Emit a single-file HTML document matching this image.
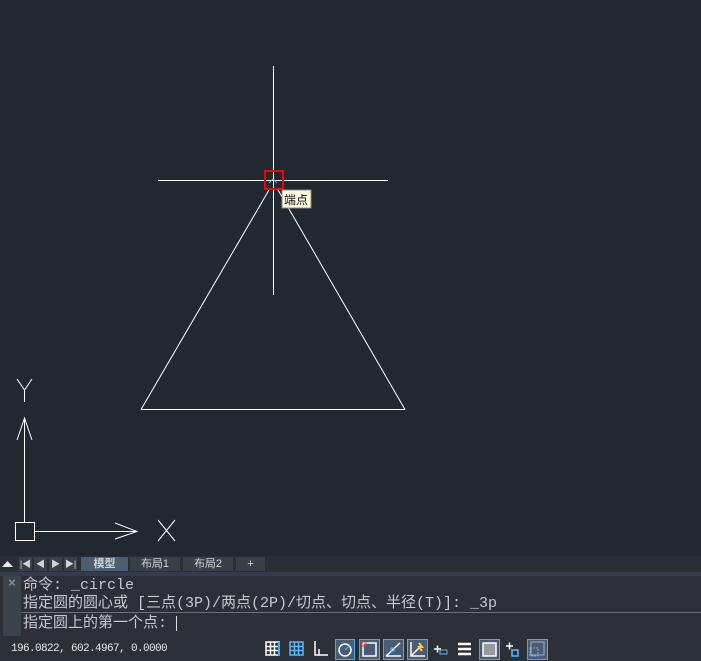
<!DOCTYPE html><html><head><meta charset="utf-8"><style>
*{margin:0;padding:0;box-sizing:border-box}
body{width:701px;height:661px;background:#212830;position:relative;overflow:hidden;font-family:"Liberation Mono","Noto Sans CJK SC",monospace}
.abs{position:absolute}
.tab{position:absolute;top:557px;height:14px;background:#3a3f47;color:#d0d4d8;font-size:11px;line-height:14px;text-align:center;font-family:"Liberation Sans","Noto Sans CJK SC",sans-serif}
.cl{position:absolute;left:23px;font-size:15px;color:#c4c9cf;white-space:nowrap;line-height:18px}
</style></head><body>
<svg class="abs" style="left:0;top:0" width="701" height="556">
<g stroke="#fff" stroke-width="1" fill="none" shape-rendering="crispEdges">
<line x1="273.5" y1="66" x2="273.5" y2="295"/>
<line x1="158" y1="180.5" x2="388" y2="180.5"/>
<line x1="141" y1="409.5" x2="405" y2="409.5"/>
<line x1="24.5" y1="418" x2="24.5" y2="522"/>
<line x1="35" y1="531.5" x2="137" y2="531.5"/>
<rect x="15.5" y="522.5" width="19" height="18"/>
</g>
<g stroke="#fff" stroke-width="1" fill="none">
<line x1="141" y1="409.5" x2="269" y2="190"/>
<line x1="405" y1="409.5" x2="278" y2="190"/>
<polyline points="17,440 24.5,418 32,440"/>
<polyline points="115,523 137,531.5 115,539"/>
<polyline points="17,379 24.5,390 32,379"/><line x1="24.5" y1="390" x2="24.5" y2="402"/>
<line x1="158" y1="520" x2="175" y2="541"/><line x1="175" y1="520" x2="158" y2="541"/>
</g>
<rect x="265" y="171" width="18" height="18" fill="none" stroke="#f00" stroke-width="2"/>
<polyline points="269,183 273,179 277,183" stroke="#6af" fill="none"/>
<rect x="282" y="190" width="29" height="18" fill="#fffbe0" stroke="#888"/>
<text x="284" y="204" font-size="12" fill="#111" font-family="Noto Sans CJK SC,sans-serif">端点</text>
</svg>
<div class="abs" style="left:0;top:556px;width:701px;height:16px;background:#2a2f36"></div>
<svg class="abs" style="left:2px;top:560px" width="12" height="8"><path d="M0 7L5.5 1L11 7Z" fill="#eee"/></svg>
<div class="tab" style="left:19px;width:13px;font-size:9px">|◀</div>
<div class="tab" style="left:34px;width:13px;font-size:9px">◀</div>
<div class="tab" style="left:49px;width:13px;font-size:9px">▶</div>
<div class="tab" style="left:64px;width:13px;font-size:9px">▶|</div>
<div class="tab" style="left:81px;width:47px;background:#4d5d72;font-weight:bold">模型</div>
<div class="tab" style="left:130px;width:50px">布局1</div>
<div class="tab" style="left:183px;width:50px">布局2</div>
<div class="tab" style="left:236px;width:29px">+</div>
<div class="abs" style="left:0;top:572px;width:701px;height:4px;background:#353b48"></div>
<div class="abs" style="left:0;top:576px;width:701px;height:61px;background:#2c2f35"></div>
<div class="abs" style="left:3px;top:576px;width:18px;height:60px;background:#3c424b;color:#8a9099;font-size:13px;text-align:center;line-height:16px;font-weight:bold">×</div>
<div class="abs" style="left:21px;top:612px;width:680px;height:1px;background:#6a7078"></div>
<div class="cl" style="top:577px">命令: _circle</div>
<div class="cl" style="top:595px">指定圆的圆心或 [三点(3P)/两点(2P)/切点、切点、半径(T)]: _3p</div>
<div class="cl" style="top:615px">指定圆上的第一个点: <span style="display:inline-block;width:1px;height:15px;background:#ddd;vertical-align:middle"></span></div>
<div class="abs" style="left:0;top:637px;width:701px;height:24px;background:#2b2f36"></div>
<div class="abs" style="left:11px;top:643px;font-size:11px;letter-spacing:-0.6px;color:#e6e8ea">196.0822, 602.4967, 0.0000</div>
<svg class="abs" style="left:0;top:638px" width="701" height="23" fill="none" stroke="#fff">
<g stroke-width="1.5"><rect x="266" y="4" width="13" height="13"/><path d="M270.5 4v13M274.5 4v13M266 8.5h13M266 12.5h13"/></g>
<path d="M279 4v14" stroke="#4aa8f0" stroke-width="2"/>
<g stroke="#5ab8ff" stroke-width="1.5"><rect x="290" y="4" width="13" height="13"/><path d="M294.5 4v13M298.5 4v13M290 8.5h13M290 12.5h13"/></g>
<path d="M315 3v14h13M319 11v6" stroke-width="1.5"/>
<rect x="335.5" y="1.5" width="19" height="20" fill="#4a5c74" stroke="#4aa8f0"/>
<circle cx="345" cy="12" r="6" stroke-width="1.5"/><path d="M345 12l5-5" stroke="#5ab8ff"/>
<rect x="359.5" y="1.5" width="20" height="20" fill="#4a5c74" stroke="#4aa8f0"/>
<rect x="363" y="5" width="13" height="13" stroke-width="1.5"/><rect x="362" y="4" width="4" height="4" stroke="#f33"/>
<rect x="383.5" y="1.5" width="20" height="20" fill="#4a5c74" stroke="#4aa8f0"/>
<path d="M386 18l14-13M386 18h15" stroke-width="1.5"/><rect x="391" y="10" width="3" height="3" stroke="#5ab8ff"/>
<rect x="407.5" y="1.5" width="20" height="20" fill="#4a5c74" stroke="#4aa8f0"/>
<path d="M411 4v14h14M411 18l8-8" stroke-width="1.5"/><path d="M419 5l3 4h-3l3 4" stroke="#fc3" stroke-width="2"/>
<path d="M434 11h7M437.5 7.5v7" stroke-width="1.5"/><rect x="440" y="12" width="7" height="4" stroke="#5ab8ff"/>
<path d="M458 6h13M458 11h13M458 16h13" stroke-width="2.5"/>
<rect x="479.5" y="1.5" width="20" height="20" fill="#4a5c74" stroke="#4aa8f0"/>
<rect x="483" y="5" width="13" height="13" fill="#999" stroke-width="1.5"/>
<path d="M506 8h7M509.5 4.5v7" stroke-width="1.5"/><rect x="512" y="12" width="6" height="6" stroke="#5ab8ff" stroke-width="1.5"/>
<rect x="527.5" y="1.5" width="20" height="20" fill="#4a5c74" stroke="#4aa8f0"/>
<rect x="531" y="4" width="13" height="13" stroke="#aac"/><rect x="530" y="10" width="8" height="8" stroke="#5ab8ff" stroke-dasharray="2 1"/>
</svg>
</body></html>
